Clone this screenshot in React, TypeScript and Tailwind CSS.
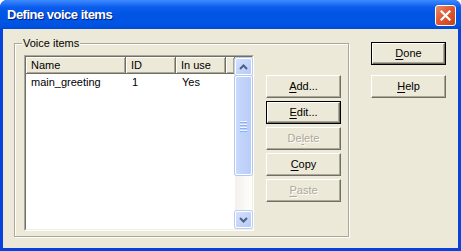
import React from "react";

const font = { fontFamily: '"Liberation Sans", Arial, sans-serif' };

function Mn({ text, at }: { text: string; at: number }) {
  return (
    <>
      {text.slice(0, at)}
      <span className="underline underline-offset-[2px]">{text[at]}</span>
      {text.slice(at + 1)}
    </>
  );
}

function Btn({
  label,
  at,
  disabled,
  isDefault,
}: {
  label: string;
  at: number;
  disabled?: boolean;
  isDefault?: boolean;
}) {
  const inner = (
    <div
      className={
        "flex h-full w-full items-center justify-center border border-t-white border-l-white border-r-[#716F64] border-b-[#716F64] bg-[#ECE9D8] text-[11px] shadow-[inset_-1px_-1px_0_#ACA899] " +
        (disabled ? "text-[#ACA899] [text-shadow:1px_1px_0_#fff]" : "text-black")
      }
    >
      <span>
        <Mn text={label} at={at} />
      </span>
    </div>
  );
  return (
    <div className={"h-[23px] w-[75px] " + (isDefault ? "border border-black" : "")}>{inner}</div>
  );
}

function HeaderCell({ label, w }: { label: string; w: string }) {
  return (
    <div
      className={
        "flex h-full items-center border-r border-b border-r-[#716F64] border-b-[#716F64] pl-[5px] shadow-[inset_1px_1px_0_#fff,inset_-1px_-1px_0_#ACA899] " +
        w
      }
    >
      {label}
    </div>
  );
}

function ScrollArrow({ up }: { up?: boolean }) {
  return (
    <div className="flex h-[17px] w-[17px] items-center justify-center rounded-[2px] border border-white bg-gradient-to-br from-[#D5E1FC] to-[#B6CAF6] shadow-[0_0_0_1px_#B9CCF5]">
      <svg width="9" height="6" viewBox="0 0 9 6">
        <path
          d={up ? "M1 5 L4.5 1.5 L8 5" : "M1 1 L4.5 4.5 L8 1"}
          fill="none"
          stroke="#4D6185"
          strokeWidth="2"
        />
      </svg>
    </div>
  );
}

export default function App() {
  return (
    <div className="h-[251px] w-[461px] bg-white" style={font}>
      <div className="flex h-full w-full flex-col overflow-hidden rounded-t-[7px] bg-[#0842DC]">
        {/* title bar */}
        <div className="flex h-[29px] shrink-0 items-center justify-between bg-[linear-gradient(to_bottom,#3B8CFF_0%,#2B78F7_10%,#0A5CEC_25%,#0055E5_50%,#0054E3_85%,#0049D6_100%)] pl-[7px] pr-[5px]">
          <span className="text-[13px] font-bold tracking-[-0.5px] text-white [text-shadow:1px_1px_0_#0A1E7A]">
            Define voice items
          </span>
          <div className="mt-[1px] flex h-[21px] w-[21px] items-center justify-center rounded-[3px] border border-white bg-[linear-gradient(135deg,#EA8C6C_0%,#E15A33_45%,#C7411C_100%)]">
            <svg width="11" height="11" viewBox="0 0 11 11">
              <path d="M1.5 1.5 L9.5 9.5 M9.5 1.5 L1.5 9.5" stroke="#fff" strokeWidth="2.2" strokeLinecap="square" />
            </svg>
          </div>
        </div>

        {/* client area */}
        <div className="mx-[3px] mb-[3px] flex flex-1 bg-[#ECE9D8] text-[11px] text-black">
          {/* group box */}
          <div className="relative ml-[11px] mt-[14px] h-[194px] w-[335px] border border-[#ACA899] shadow-[inset_1px_1px_0_#fff,1px_1px_0_#fff]">
            <span className="absolute -top-[8px] left-[7px] bg-[#ECE9D8] px-[1px] leading-[14px]">Voice items</span>
            <div className="flex pl-[9px] pt-[11px]">
              {/* list view */}
              <div className="flex h-[176px] w-[230px] border border-t-[#ACA899] border-l-[#ACA899] border-r-white border-b-white">
                <div className="flex flex-1 border border-t-[#716F64] border-l-[#716F64] border-r-[#F1EFE2] border-b-[#F1EFE2] bg-white">
                  <div className="flex flex-1 flex-col">
                    <div className="flex h-[17px] bg-[#ECE9D8]">
                      <HeaderCell label="Name" w="w-[100px]" />
                      <HeaderCell label="ID" w="w-[50px]" />
                      <HeaderCell label="In use" w="w-[50px]" />
                      <HeaderCell label="" w="flex-1" />
                    </div>
                    <div className="flex h-[15px] items-center leading-[14px]">
                      <span className="w-[100px] pl-[5px]">main_greeting</span>
                      <span className="w-[50px] pl-[6px]">1</span>
                      <span className="w-[50px] pl-[6px]">Yes</span>
                    </div>
                  </div>
                  {/* scrollbar */}
                  <div className="flex w-[17px] flex-col bg-gradient-to-r from-[#F3F1EC] to-[#FEFEFB] pt-[1px]">
                    <ScrollArrow up />
                    <div className="mt-[1px] flex h-[99px] flex-col items-center justify-center gap-[1px] rounded-[2px] border border-white bg-gradient-to-r from-[#C9D8FC] to-[#B8CDF8] shadow-[0_0_0_1px_#B4C8F6]">
                      <div className="h-[1px] w-[7px] bg-[#EEF4FE] shadow-[0_1px_0_#8CB0F8]" />
                      <div className="mt-[1px] h-[1px] w-[7px] bg-[#EEF4FE] shadow-[0_1px_0_#8CB0F8]" />
                      <div className="mt-[1px] h-[1px] w-[7px] bg-[#EEF4FE] shadow-[0_1px_0_#8CB0F8]" />
                      <div className="mt-[1px] h-[1px] w-[7px] bg-[#EEF4FE] shadow-[0_1px_0_#8CB0F8]" />
                    </div>
                    <div className="flex-1" />
                    <div className="mb-[1px]">
                      <ScrollArrow />
                    </div>
                  </div>
                </div>
              </div>

              {/* list buttons */}
              <div className="ml-[12px] mt-[20px] flex flex-col gap-[3px]">
                <Btn label="Add..." at={0} />
                <Btn label="Edit..." at={0} isDefault />
                <Btn label="Delete" at={2} disabled />
                <Btn label="Copy" at={0} />
                <Btn label="Paste" at={0} disabled />
              </div>
            </div>
          </div>

          {/* dialog buttons */}
          <div className="ml-[22px] mt-[13px] flex flex-col gap-[10px]">
            <Btn label="Done" at={0} isDefault />
            <Btn label="Help" at={0} />
          </div>
        </div>
      </div>
    </div>
  );
}
